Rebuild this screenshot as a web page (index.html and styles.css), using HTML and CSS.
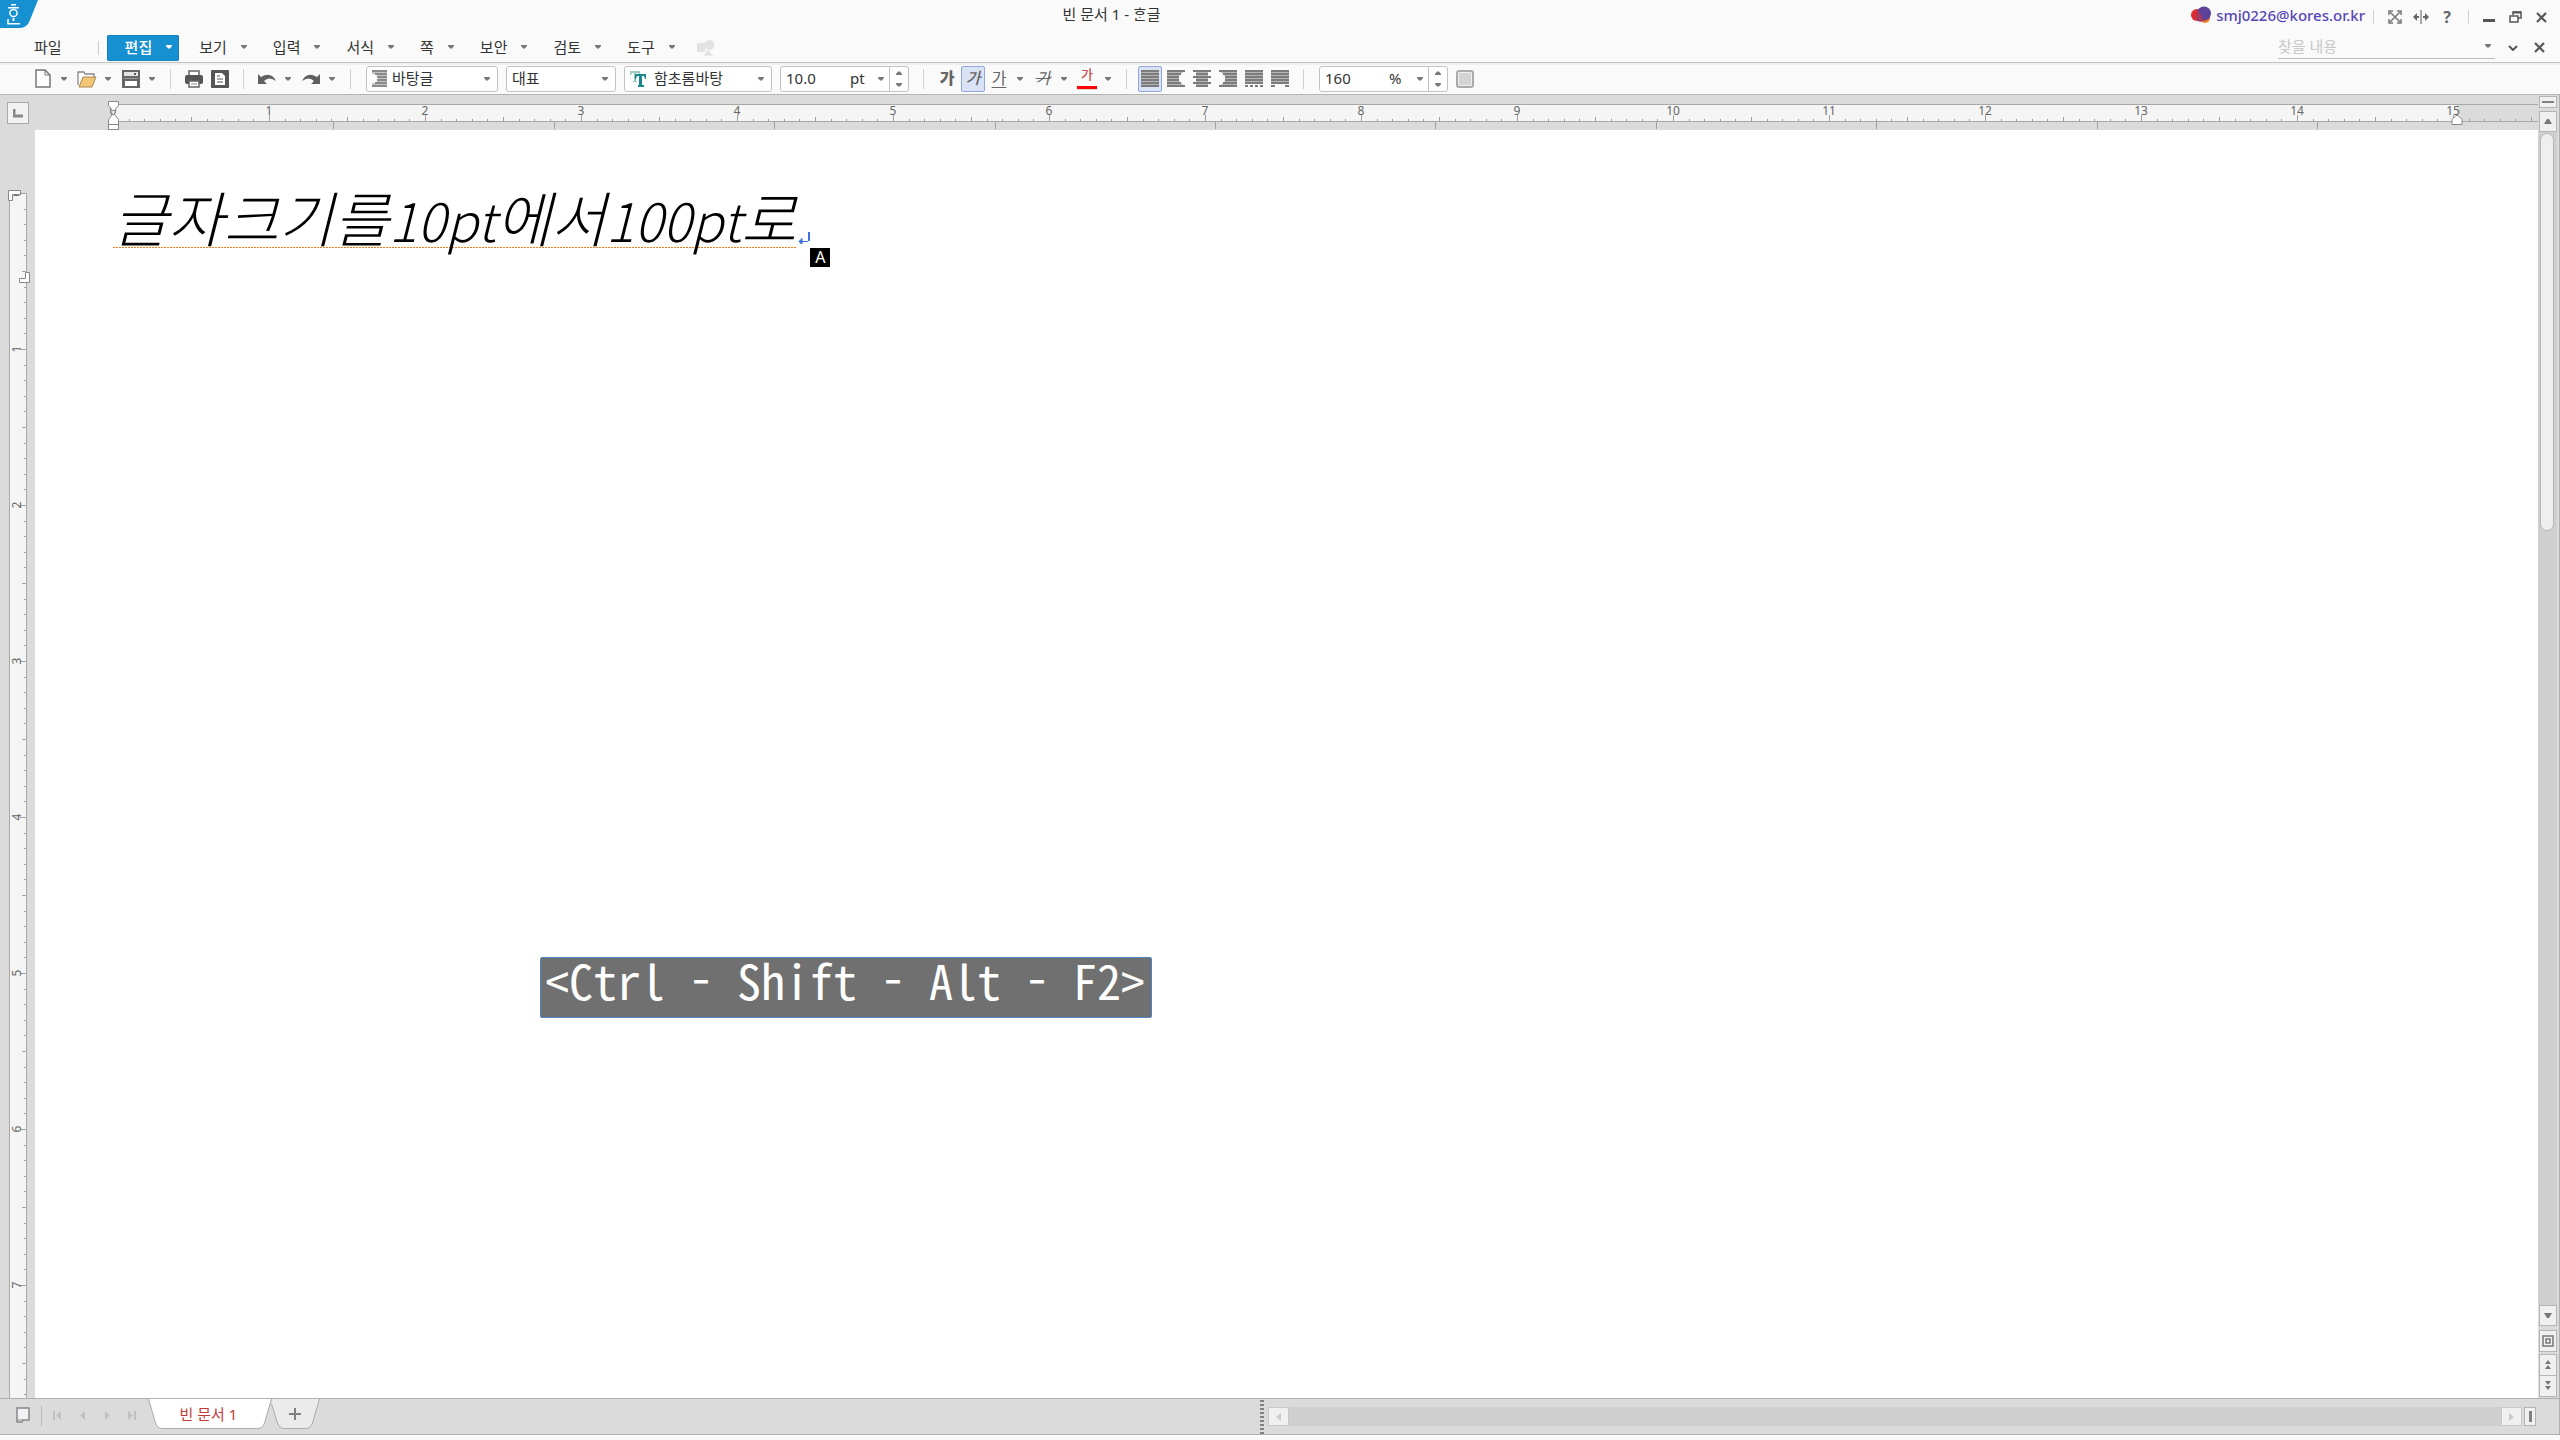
FILE: index.html
```html
<!DOCTYPE html>
<html lang="ko">
<head>
<meta charset="utf-8">
<title>빈 문서 1 - 한글</title>
<link rel="stylesheet" href="styles.css">
</head>
<body>
<svg class="defs" aria-hidden="true">
  <symbol id="caret" viewBox="0 0 6 4"><path d="M0 0h6v1L4 3.500H2L0 1z" fill="currentColor"/></symbol>
  <symbol id="caret-up" viewBox="0 0 6 4"><path d="M0 4h6V3L4 .5H2L0 3z" fill="currentColor"/></symbol>
  <symbol id="cross" viewBox="0 0 11 11"><path d="M1 1l9 9M10 1l-9 9" stroke="#555" stroke-width="2.200"/></symbol>
</svg>
<div class="app">
  <header class="titlebar">
    <svg class="logo" viewBox="0 0 38 28"><path d="M0 0h38l-8 20q-3 8-10 8H0z" fill="#1790d2"/><g fill="none" stroke="#fff" stroke-width="1.500"><path d="M11 4.700h5M8 7.700h11M8 19v4.700h12"/><circle cx="13.500" cy="13" r="3.600"/></g><path d="M12.500 18h2v3h-2z" fill="#fff"/></svg>
    <h1 class="title">빈 문서 1 - ᄒᆞᆫ글</h1>
    <a class="account" href="#">
      <svg width="20" height="18" viewBox="0 0 20 18"><circle cx="6" cy="9" r="6" fill="#dd2c2f"/><circle cx="14" cy="12" r="5" fill="#f47b20"/><circle cx="13" cy="7.500" r="7" fill="#5b4199"/><path d="M6 3q5 6 7 12Q8 17 5 14z" fill="#a33a62"/></svg>
      smj0226@kores.or.kr</a>
    <span class="sep small"></span>
    <div class="winbtns">
      <button aria-label="전체 화면"><svg width="14" height="14" viewBox="0 0 14 14" fill="none" stroke="#777" stroke-width="2"><path d="M1 5V1h4M9 1h4v4M13 9v4H9M5 13H1V9" stroke-width="1.500"/><path d="M2 2l10 10M12 2L2 12" stroke-width="1.500"/></svg></button>
      <button aria-label="창 나누기"><svg width="16" height="14" viewBox="0 0 16 14"><path d="M7 0h2v14H7z" fill="#aaa"/><path d="M0 7l4-4v3h2v2H4v3zM16 7l-4-4v3h-2v2h2v3z" fill="#666"/></svg></button>
      <button class="help" aria-label="도움말">?</button>
    </div>
    <span class="sep small"></span>
    <div class="winbtns">
      <button aria-label="최소화"><svg width="12" height="12" viewBox="0 0 12 12"><path d="M0 8h12v3H0z" fill="#555"/></svg></button>
      <button aria-label="이전 크기로"><svg width="13" height="12" viewBox="0 0 13 12" fill="none" stroke="#555"><path d="M4 4V1h8v6H9" stroke-width="1.500"/><path d="M4 1.500h8" stroke-width="2"/><path d="M1 5h8v6H1z" stroke-width="1.500"/></svg></button>
      <button aria-label="닫기"><svg width="11" height="11"><use href="#cross"/></svg></button>
    </div>
  </header>

  <nav class="menubar">
    <button class="menu file">파일</button>
    <span class="sep small"></span>
    <button class="menu active">편집<svg class="caret"><use href="#caret"/></svg></button>
    <button class="menu">보기<svg class="caret"><use href="#caret"/></svg></button>
    <button class="menu">입력<svg class="caret"><use href="#caret"/></svg></button>
    <button class="menu">서식<svg class="caret"><use href="#caret"/></svg></button>
    <button class="menu">쪽<svg class="caret"><use href="#caret"/></svg></button>
    <button class="menu">보안<svg class="caret"><use href="#caret"/></svg></button>
    <button class="menu">검토<svg class="caret"><use href="#caret"/></svg></button>
    <button class="menu">도구<svg class="caret"><use href="#caret"/></svg></button>
    <svg class="shapes" width="18" height="16" viewBox="0 0 18 16" fill="#e2e2e2"><path d="M0 3h8v9H0z"/><circle cx="12.500" cy="5" r="5"/><path d="M11 9l5 7H6z" stroke="#fafafa" stroke-width=".5"/></svg>
    <div class="search">
      <input type="text" placeholder="찾을 내용" aria-label="찾을 내용">
      <svg class="caret"><use href="#caret"/></svg>
    </div>
    <div class="winbtns">
      <button aria-label="메뉴 접기"><svg width="10" height="6" viewBox="0 0 10 6" fill="none" stroke="#555" stroke-width="2"><path d="M1 1l4 4 4-4"/></svg></button>
      <button aria-label="문서 닫기"><svg width="11" height="11"><use href="#cross"/></svg></button>
    </div>
  </nav>

  <div class="toolbar" role="toolbar">
    <div class="group">
      <button class="tool" aria-label="새 문서"><svg width="16" height="20" viewBox="0 0 16 20"><path d="M1 1h9l5 5v12H1z" fill="#fff" stroke="#777" stroke-width="1.500"/><path d="M10 1v5h5" fill="none" stroke="#777"/></svg></button>
      <button class="drop" aria-label="새 문서 목록"><svg class="caret"><use href="#caret"/></svg></button>
      <button class="tool" aria-label="열기"><svg width="20" height="18" viewBox="0 0 20 18"><path d="M1 15V2h6l1 2h9v4" fill="#fff" stroke="#888" stroke-width="1.300"/><path d="M6 7h13l-4 10H2z" fill="#f3c677" stroke="#a78652"/></svg></button>
      <button class="drop" aria-label="열기 목록"><svg class="caret"><use href="#caret"/></svg></button>
      <button class="tool" aria-label="저장"><svg width="18" height="18" viewBox="0 0 18 18"><path d="M0 0h18v18H0z" fill="#666"/><path d="M2 2h14v4H2z" fill="#e4e4e4"/><path d="M12 3h2v2h-2z" fill="#555"/><path d="M3 11h12v5H3z" fill="#fff"/><path d="M2 8h14v1H2z" fill="#999"/></svg></button>
      <button class="drop" aria-label="저장 목록"><svg class="caret"><use href="#caret"/></svg></button>
    </div>
    <span class="sep"></span>
    <div class="group">
      <button class="tool" aria-label="인쇄"><svg width="18" height="18" viewBox="0 0 18 18"><path d="M4 1h10v5H4z" fill="#fff" stroke="#666" stroke-width="1.500"/><rect y="5" width="18" height="9" rx="2" fill="#555"/><path d="M4 11h10v6H4z" fill="#fff" stroke="#666" stroke-width="1.500"/><path d="M6 14h6" stroke="#888"/></svg></button>
      <button class="tool" aria-label="미리 보기"><svg width="18" height="18" viewBox="0 0 18 18"><rect width="18" height="18" rx="1" fill="#555"/><path d="M4 3h7l3 3v9H4z" fill="#fff"/><path d="M6 6h3M6 9h6M6 12h6" stroke="#555" stroke-width="1.200"/></svg></button>
    </div>
    <span class="sep"></span>
    <div class="group">
      <button class="tool" aria-label="되돌리기"><svg width="18" height="12" viewBox="0 0 18 12"><path d="M0 1v10h9L6 8q5-5 12 0Q13-2 3 4z" fill="#606060"/></svg></button>
      <button class="drop" aria-label="되돌리기 목록"><svg class="caret"><use href="#caret"/></svg></button>
      <button class="tool" aria-label="다시 실행"><svg width="18" height="12" viewBox="0 0 18 12"><path d="M18 1v10H9l3-3Q7 3 0 8 5-2 15 4z" fill="#606060"/></svg></button>
      <button class="drop" aria-label="다시 실행 목록"><svg class="caret"><use href="#caret"/></svg></button>
    </div>
    <span class="sep"></span>
    <div class="group fields">
      <label class="combo style">
        <svg width="15" height="18" viewBox="0 0 15 18"><path d="M0 0h15v17H0v-4h3l3-3V7L3 4H0z" fill="#c4c4c4"/><path d="M0 1h15M3 4h12M5 7h10M5 10h10M3 13h12M0 16h15" stroke="#777" stroke-width="1.500"/></svg>
        <select aria-label="스타일"><option>바탕글</option></select><svg class="caret"><use href="#caret"/></svg>
      </label>
      <label class="combo lang">
        <select aria-label="언어"><option>대표</option></select><svg class="caret"><use href="#caret"/></svg>
      </label>
      <label class="combo font">
        <svg width="16" height="18" viewBox="0 0 16 18"><path d="M0 1h10v4H9L8 3H6v8h1v1H3v-1h1V3H2L1 5H0z" fill="#9ccbc6"/><path d="M5 4h11v5h-1l-1-3h-2v9h2v2H8v-2h1V6H7L6 9H5z" fill="#1d8791"/></svg>
        <select aria-label="글꼴"><option>함초롬바탕</option></select><svg class="caret"><use href="#caret"/></svg>
      </label>
      <div class="combo spin">
        <input type="text" value="10.0" aria-label="글자 크기">
        <select class="unit" aria-label="단위"><option>pt</option></select><svg class="caret"><use href="#caret"/></svg>
        <span class="steps"><button aria-label="크게"><svg class="caret"><use href="#caret-up"/></svg></button><button aria-label="작게"><svg class="caret"><use href="#caret"/></svg></button></span>
      </div>
    </div>
    <span class="sep"></span>
    <div class="group">
      <button class="tool glyph bold">가</button>
      <button class="tool glyph italic on">가</button>
      <button class="tool glyph under">가</button>
      <button class="drop" aria-label="밑줄 종류"><svg class="caret"><use href="#caret"/></svg></button>
      <button class="tool glyph strike">가</button>
      <button class="drop" aria-label="취소선 종류"><svg class="caret"><use href="#caret"/></svg></button>
      <button class="tool color"><span>가</span></button>
      <button class="drop" aria-label="글자 색 목록"><svg class="caret"><use href="#caret"/></svg></button>
    </div>
    <span class="sep"></span>
    <div class="group aligns">
      <button class="tool on" aria-label="양쪽 정렬"><svg viewBox="0 0 18 18"><path class="fill" d="M0 0h18v17H0z"/><path d="M0 1h18M0 4h18M0 7h18M0 10h18M0 13h18M0 16h18"/></svg></button>
      <button class="tool" aria-label="왼쪽 정렬"><svg viewBox="0 0 18 18"><path class="fill" d="M0 0h18l-6 6v5l6 6H0z"/><path d="M0 1h18M0 4h14M0 7h12M0 10h12M0 13h14M0 16h18"/></svg></button>
      <button class="tool" aria-label="가운데 정렬"><svg viewBox="0 0 18 18"><path class="fill" d="M3 0h12v17H3z"/><path d="M0 1h18M3 4h12M0 7h18M3 10h12M0 13h18M3 16h12"/></svg></button>
      <button class="tool" aria-label="오른쪽 정렬"><svg viewBox="0 0 18 18"><path class="fill" d="M0 0h18v17H0l6-6V6z"/><path d="M0 1h18M4 4h14M6 7h12M6 10h12M4 13h14M0 16h18"/></svg></button>
      <button class="tool" aria-label="배분 정렬"><svg viewBox="0 0 18 18"><path class="fill" d="M0 0h18v14H0z"/><path d="M0 1h18M0 4h18M0 7h18M0 10h18M0 13h18"/><path d="M0 16h18" stroke-dasharray="3 2"/></svg></button>
      <button class="tool" aria-label="나눔 정렬"><svg viewBox="0 0 18 18"><path class="fill" d="M0 0h18v14H0z"/><path d="M0 1h18M0 4h18M0 7h18M0 10h18M0 13h18M0 16h4M14 16h4"/></svg></button>
    </div>
    <span class="sep"></span>
    <div class="group fields">
      <div class="combo spin">
        <input type="text" value="160" aria-label="줄 간격">
        <select class="unit" aria-label="줄 간격 단위"><option>%</option></select><svg class="caret"><use href="#caret"/></svg>
        <span class="steps"><button aria-label="넓게"><svg class="caret"><use href="#caret-up"/></svg></button><button aria-label="좁게"><svg class="caret"><use href="#caret"/></svg></button></span>
      </div>
      <button class="stop" aria-label="중지"></button>
    </div>
  </div>

  <main class="work">
    <div class="corner"><button aria-label="탭 종류"><svg width="10" height="9" viewBox="0 0 10 9"><path d="M1 0v7h9" fill="none" stroke="#888" stroke-width="3"/></svg></button></div>
    <svg class="hruler" id="hruler"></svg>
    <svg class="vruler" id="vruler"></svg>
    <section class="page">
      <p class="line"><span class="run" contenteditable="true" spellcheck="false">글자크기를<span class="latin">10pt</span>에서<span class="latin">100pt</span>로</span><svg class="ret" width="12" height="12" viewBox="0 0 12 12"><path d="M11 0v9" stroke="#3f6fe0" stroke-width="2"/><path d="M2 9.500h8M4 6.500v6L1 9.500z" stroke="#3f6fe0" fill="#3f6fe0"/></svg><span class="ime">A</span></p>
      <div class="keys">&lt;Ctrl - Shift - Alt - F2&gt;</div>
    </section>
    <aside class="vscroll">
      <button class="split" aria-label="가로로 나누기"></button>
      <button class="up" aria-label="위로"><svg width="8" height="5"><path d="M0 5h8L5 0H3z" fill="#777"/></svg></button>
      <div class="track"><div class="thumb"></div></div>
      <button class="down" aria-label="아래로"><svg width="8" height="5"><path d="M0 0h8L5 5H3z" fill="#777"/></svg></button>
      <button class="pick" aria-label="개체 선택"><svg width="12" height="12" fill="none" stroke="#777"><path d="M1 1h10v10H1z" stroke-width="1.500"/><path d="M4 4h4v4H4z" stroke-width="1.500"/></svg></button>
      <button class="prev" aria-label="이전 쪽"><svg width="6" height="10"><path d="M0 4h6L3 0zM0 9h6L3 5z" fill="#777"/></svg></button>
      <button class="next" aria-label="다음 쪽"><svg width="6" height="10"><path d="M0 0h6L3 4zM0 5h6L3 9z" fill="#777"/></svg></button>
    </aside>
  </main>

  <footer class="bottom">
    <div class="tabs">
      <button class="pages" aria-label="탭 목록"><svg width="14" height="16" viewBox="0 0 14 16"><path d="M1 1h12v12H7l-1 2H1z" fill="#f1f1f6" stroke="#888" stroke-width="1.500"/><path d="M1 13h6" stroke="#888"/></svg></button>
      <span class="sep"></span>
      <div class="nav">
        <button aria-label="처음 탭"><svg width="8" height="9"><path d="M0 0h2v9H0zM8 0v9L3 4.500z" fill="#c0c0c0"/></svg></button>
        <button aria-label="이전 탭"><svg width="5" height="9"><path d="M5 0v9L0 4.500z" fill="#c0c0c0"/></svg></button>
        <button aria-label="다음 탭"><svg width="5" height="9"><path d="M0 0v9l5-4.500z" fill="#c0c0c0"/></svg></button>
        <button aria-label="마지막 탭"><svg width="8" height="9"><path d="M6 0h2v9H6zM0 0v9l5-4.500z" fill="#c0c0c0"/></svg></button>
      </div>
      <button class="tab current"><svg class="shape" width="125" height="31" viewBox="0 0 125 31"><path d="M.5 0l7 24q2 5.500 7 5.500h95q5 0 7-5.500l7-24" fill="#fff" stroke="#aaa"/></svg><span>빈 문서 1</span></button>
      <button class="tab add" aria-label="새 탭"><svg class="shape" width="49" height="31" viewBox="0 0 49 31"><path d="M.5 5l6 19q2 5.500 7 5.500h21q5 0 7-5.500l7-24H2z" fill="#ebebeb"/><path d="M.5 5l6 19q2 5.500 7 5.500h21q5 0 7-5.500l7-24" fill="none" stroke="#aaa"/></svg><svg class="plus" width="12" height="12"><path d="M6 0v12M0 6h12" stroke="#808080" stroke-width="2"/></svg></button>
    </div>
    <div class="hscroll">
      <span class="grip"></span>
      <button class="arrow" aria-label="왼쪽으로"><svg width="5" height="8"><path d="M5 0v8L0 4z" fill="#ccc"/></svg></button>
      <div class="htrack"></div>
      <button class="arrow" aria-label="오른쪽으로"><svg width="5" height="8"><path d="M0 0v8l5-4z" fill="#ccc"/></svg></button>
      <button class="vsplit" aria-label="세로로 나누기"></button>
    </div>
  </footer>
  <div class="base"></div>
</div>
<script src="ruler.js"></script>
</body>
</html>
```
FILE: styles.css
```css
* { box-sizing: border-box; }
body { margin: 0; }
button, input, select {
  font: inherit; color: inherit; background: none; border: 0; padding: 0; margin: 0;
  appearance: none; outline: 0; border-radius: 0;
}
button { display: flex; align-items: center; justify-content: center; flex: none; }
svg { flex: none; }
.defs { display: none; }

.app {
  min-height: 100vh; display: flex; flex-direction: column;
  background: #fafafa; color: #333;
  font: 15px/20px "Noto Sans", "Noto Sans CJK KR", sans-serif;
}
.caret { width: 6px; height: 4px; color: #777; }
.sep { width: 1px; height: 20px; background: #d0d0d0; margin: 0 11px; flex: none; }
.sep.small { height: 14px; }

/* title bar */
.titlebar { height: 34px; display: flex; align-items: center; padding-right: 6px; }
.logo { width: 38px; height: 28px; align-self: flex-start; }
.title { flex: 1; margin: 0; padding-right: 6px; font-size: 15px; font-weight: 400; line-height: 28px; align-self: flex-start; text-align: center; }
.account { display: flex; align-items: center; gap: 5px; color: #5846b5; font-weight: 500; text-decoration: none; height: 30px; align-self: flex-start; }
.account + .sep { margin: 0 8px; }
.winbtns { display: flex; }
.winbtns button { width: 26px; height: 24px; }
.titlebar .winbtns + .sep { margin: 0 7px 0 8px; }
.help { font-weight: 700; font-size: 16px; color: #666; }

/* menu bar */
.menubar { height: 29px; display: flex; align-items: center; padding: 0 8px 1px 34px; border-bottom: 1px solid #c3c3c3; }
.menu { height: 26px; gap: 14px; padding: 0 7px 2px 18px; margin-right: 1px; }
.menu.file { padding: 0 0 2px; margin: 0; }
.menubar > .sep { margin: 0 8px 0 36px; }
.menu.active { background: #1790d2; border-radius: 2px; box-shadow: inset 0 0 0 1px #1583c0; color: #fff; font-weight: 500; margin-right: 2px; }
.menu.active .caret { color: #fff; }
.shapes { margin-left: 14px; }
.search { margin-left: auto; width: 217px; height: 22px; display: flex; align-items: center; padding: 0 4px 2px 0; border-bottom: 1px solid #bbb; margin-right: 5px; }
.search input { flex: 1; min-width: 0; }
.search input::placeholder { color: #c8c8c8; }

/* tool bar */
.toolbar { height: 32px; display: flex; align-items: center; padding: 0 0 1px 31px; border-top: 2px solid #f0f0f0; border-bottom: 1px solid #b4b4b4; }
.group { display: flex; align-items: center; gap: 2px; }
.tool { width: 24px; height: 26px; }
.drop { width: 14px; height: 26px; }
.drop + .tool { margin-left: 2px; }
.on { background: #dae2f5; border: 1px solid #90a6dc; border-radius: 2px; }
.fields { gap: 8px; margin: 0 3px 0 4px; }
.combo { height: 26px; display: flex; align-items: center; border: 1px solid #c2c2c2; border-radius: 3px; background: #fff; padding: 0 7px 0 5px; }
.combo select, .combo input { flex: 1; min-width: 0; height: 24px; padding-bottom: 2px; }
.combo > svg:first-child { margin-right: 5px; }
.combo.font > svg:first-child { margin-right: 8px; }
.style { width: 132px; }
.lang { width: 110px; }
.font { width: 148px; }
.spin { width: 129px; padding-right: 0; padding-left: 5px; }
.combo .unit { flex: none; width: 28px; }
.steps { width: 19px; height: 24px; margin-left: 5px; border-left: 1px solid #c2c2c2; display: flex; flex-direction: column; }
.steps button { flex: 1; }
.glyph { font-size: 16px; color: #666; padding-bottom: 2px; }
.bold { font-weight: 900; }
.italic { font-style: italic; font-weight: 500; }
.under { text-decoration: underline; text-underline-offset: 3px; }
.strike { text-decoration: line-through; font-style: italic; }
.color { font-size: 13px; font-weight: 500; color: #c4504f; align-items: flex-start; }
.color span { line-height: 16px; width: 20px; height: 23px; border-bottom: 3px solid #f00; box-shadow: 0 1px #d8d8d8; }
.aligns svg { width: 18px; height: 18px; stroke: #7c7c7c; stroke-width: 2; }
.aligns .fill { fill: #b4b4b4; stroke: none; }
.stop { width: 18px; height: 18px; border: 2px solid #aaa; border-radius: 3px; background: #d4d4d4; box-shadow: inset 0 0 0 1px #eee; }

/* work area */
.work { flex: 1; display: grid; grid-template: 35px 1fr / 35px 1fr 22px; background: #dbdbdb; }
.corner { padding: 7px; }
.corner button { width: 22px; height: 22px; border: 1px solid #aaa; background: #f2f2f2; }
.hruler { width: 100%; height: 35px; overflow: visible; }
.vruler { width: 35px; height: 100%; }
.hruler text, .vruler text { font-size: 12px; fill: #666; text-anchor: middle; }
.page { grid-area: 2 / 2; background: #fff; position: relative; }
.line { margin: 54px 78px 0; display: flex; align-items: flex-end; position: relative; width: max-content; }
.run {
  font: italic 300 60px/64px "Noto Sans CJK KR", sans-serif; color: #000; outline: 0; white-space: nowrap;
  background: repeating-linear-gradient(90deg, #ee7d1c 0 2px, #fff 2px 3px) bottom / 100% 1px no-repeat;
}
.latin { font-size: 53px; line-height: 1; }
.ret { margin: 0 0 4px 2px; }
.ime { position: absolute; left: 100%; top: 100%; width: 20px; height: 19px; background: #000; color: #fff; text-align: center; font-size: 16px; line-height: 18px; }
.keys {
  position: absolute; left: 505px; top: 827px; width: 612px; height: 61px; padding-left: 4px;
  background: #707070; border: 1px solid #4a86c5; border-radius: 2px; color: #fff; white-space: nowrap;
  font: 500 48px/42px "Noto Sans Mono CJK KR", "Noto Sans Mono CJK SC", "Liberation Mono", monospace;
}

/* vertical scroll bar */
.vscroll { grid-area: 1 / 3 / 3 / 4; display: flex; flex-direction: column; padding: 1px 2px 1px 0; border-right: 1px solid #b0b0b0; }
.vscroll button { border: 1px solid #b4b4b4; background: #f0f0f0; height: 21px; margin-left: 1px; }
.vscroll .split { height: 12px; margin-bottom: 3px; }
.split::before { content: ""; width: 12px; height: 2px; background: #808080; }
.track { flex: 1; background: #cfcfcf; padding: 1px 2px; }
.thumb { width: 14px; height: 34%; border-radius: 7px; background: #efefef; border: 1px solid #b4b4b4; }
.vscroll .pick { margin-top: 4px; height: 22px; }
.vscroll .prev { margin-top: 2px; height: 22px; }
.vscroll .next { margin-top: -1px; height: 22px; }

/* bottom bar */
.bottom { height: 37px; display: grid; grid-template-columns: 1260fr 1300fr; background: #dbdbdb; border: solid #b0b0b0; border-width: 1px 1px 1px 0; }
.tabs { display: flex; align-items: flex-start; padding-left: 12px; }
.pages { width: 22px; height: 32px; }
.tabs .sep { background: #b8b8b8; margin: 7px 3px 0 7px; }
.nav { display: flex; width: 103px; }
.nav button { width: 24px; height: 32px; margin-right: 1px; }
.tab { position: relative; height: 30px; }
.tab .shape { position: absolute; left: 0; top: 0; }
.tab span, .plus { position: relative; }
.current { width: 123px; color: #bf3b3b; z-index: 1; padding-right: 2px; }
.add { width: 48px; }
.hscroll { display: flex; align-items: center; padding-right: 23px; }
.grip { width: 4px; height: 34px; margin-right: 4px; background: repeating-linear-gradient(#808080 0 2px, #dbdbdb 2px 4px); }
.arrow { width: 21px; height: 19px; border: 1px solid #c8c8c8; background: #f0f0f0; }
.htrack { flex: 1; height: 19px; background: #cfcfcf; }
.vsplit { width: 12px; height: 19px; border: 1px solid #b4b4b4; background: #f0f0f0; margin-left: 2px; }
.vsplit::before { content: ""; width: 3px; height: 11px; background: #808080; }
.base { height: 5px; }
```
FILE: ruler.js
```js
const NS = 'http://www.w3.org/2000/svg';
const INCH = 156;      // one numbered division
const TAB = 220.4;     // default tab stops

function add(parent, name, attrs, text) {
  const el = document.createElementNS(NS, name);
  for (const k in attrs) el.setAttribute(k, attrs[k]);
  if (text !== undefined) el.textContent = text;
  parent.appendChild(el);
}
const rect = (p, x, y, width, height, fill) => add(p, 'rect', { x, y, width, height, fill });
const path = (p, d) => add(p, 'path', { d, fill: '#fff', stroke: '#888' });

function drawHorizontal() {
  const svg = document.getElementById('hruler');
  svg.replaceChildren();
  const start = 78, w = svg.clientWidth, end = w - 81;
  rect(svg, start, 9, end - start, 18, '#f5f5f5');
  rect(svg, start, 9, w - start, 1, '#a8a8a8');
  rect(svg, start, 26, w - start, 1, '#a8a8a8');
  for (let i = 0; start + i * INCH / 10 < w; i++) {
    const x = Math.round(start + i * INCH / 10);
    const h = i % 10 === 0 ? 6 : i % 5 === 0 ? 4 : 2;
    rect(svg, x, 26 - h, 1, h, '#a0a0a0');
    if (i % 10 === 0) add(svg, 'text', { x, y: 20 }, i / 10);
  }
  for (let x = start + TAB; x < w - 1; x += TAB) rect(svg, Math.round(x), 27, 1, 7, '#a0a0a0');
  path(svg, 'M73.500 6.500h10v4l-4 5h-2l-4-5z');
  path(svg, 'M73.500 34.500v-10l4-5h2l4 5v10zM73.500 29.500h10');
  const m = end;
  path(svg, `M${m - 5} 29.500v-5l4-4h2l4 4v5z`);
}

function drawVertical() {
  const svg = document.getElementById('vruler');
  svg.replaceChildren();
  const start = 63, h = svg.clientHeight;
  rect(svg, 9, start, 18, h - start, '#f5f5f5');
  rect(svg, 9, start, 18, 1, '#a8a8a8');
  rect(svg, 9, start, 1, h - start, '#a8a8a8');
  rect(svg, 26, start, 1, h - start, '#a8a8a8');
  for (let i = 0; start + i * INCH / 10 < h; i++) {
    const y = Math.round(start + i * INCH / 10);
    const l = i % 10 === 0 ? 6 : i % 5 === 0 ? 4 : 2;
    rect(svg, 26 - l, y, l, 1, '#a0a0a0');
    if (i % 10 === 0) add(svg, 'text', { transform: `translate(21 ${y}) rotate(-90)` }, i / 10);
  }
  path(svg, 'M8.500 60.500h12v4h-8v6h-4z');
  path(svg, 'M29.500 142.500h-4v6h-6v4h10z');
}

function draw() { drawHorizontal(); drawVertical(); }
draw();
addEventListener('resize', draw);
```
